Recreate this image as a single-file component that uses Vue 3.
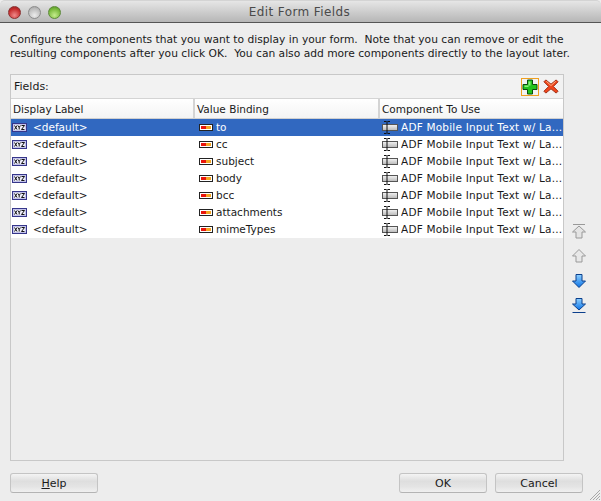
<script setup>
const rows = ['to', 'cc', 'subject', 'body', 'bcc', 'attachments', 'mimeTypes']
const intro = [
  'Configure the components that you want to display in your form.  Note that you can remove or edit the',
  'resulting components after you click OK.  You can also add more components directly to the layout later.'
]
</script>

<template>
  <div class="win">
    <header class="titlebar">
      <div class="lights">
        <span class="light red"></span>
        <span class="light grey"></span>
        <span class="light green"></span>
      </div>
      <span class="title">Edit Form Fields</span>
    </header>
    <div class="body">
      <div class="intro">
        <div v-for="line in intro" :key="line" class="line">{{ line }}</div>
      </div>
      <div class="main">
        <section class="panel">
          <div class="toolbar">
            <span class="fields">Fields:</span>
            <span class="plus-box">
              <svg width="16" height="16" viewBox="0 0 16 16"><path d="M5.500 1h5v4.500H15v5h-4.500V15h-5v-4.500H1v-5h4.500z" fill="#22c41c" stroke="#0b4d0b" stroke-width="1"/><path d="M6.500 2.500h2v4h-2z M2.500 6.500h4v1.500h-4z" fill="#8cf07c"/></svg>
            </span>
            <svg class="del" width="16" height="17" viewBox="0 0 17 17"><path d="M3 1.500 8.500 6 14 1.500 16 3.500 11 8.500 16 13.500 14 15.500 8.500 11 3 15.500 1 13.500 6 8.500 1 3.500z" fill="#f0451c" stroke="#9c2a10" stroke-width="1"/><path d="M3.500 3 8.500 7.500 13.500 3" fill="none" stroke="#ffb080" stroke-width="1"/></svg>
          </div>
          <div class="table">
            <div class="thead">
              <span class="th c1">Display Label</span>
              <span class="th c2">Value Binding</span>
              <span class="th c3">Component To Use</span>
            </div>
            <div v-for="(r, i) in rows" :key="r" class="row" :class="{ sel: i === 0 }">
              <span class="td c1">
                <svg class="ic" width="15" height="9" viewBox="0 0 15 9"><rect x=".5" y=".5" width="14" height="8" fill="#c4c4ec" stroke="#36368a"/><rect x="2" y="2" width="11" height="5" fill="#eeeefa"/><path d="M2.500 2.500 5 6.500M5 2.500 2.500 6.500M6 2.500 7.200 4.500 8.400 2.500M7.200 4.500V6.500M9.500 2.500H12.500L9.500 6.500H12.500" stroke="#111" stroke-width="1" fill="none"/></svg>
                <span class="txt">&lt;default&gt;</span>
              </span>
              <span class="td c2">
                <svg class="ic" width="14" height="7" viewBox="0 0 14 7"><rect x=".5" y=".5" width="13" height="6" fill="#fff" stroke="#222"/><rect x="2" y="2" width="5" height="3" fill="#e8140c"/><rect x="7" y="2" width="5" height="3" fill="#f5a623"/></svg>
                <span class="txt">{{ r }}</span>
              </span>
              <span class="td c3">
                <svg class="ic" width="16" height="15" viewBox="0 0 16 15"><defs><linearGradient id="f" x1="0" y1="0" x2="0" y2="1"><stop offset="0" stop-color="#f4f4f4"/><stop offset="1" stop-color="#b8b8b8"/></linearGradient></defs><rect x=".5" y="4.500" width="15" height="6" fill="url(#f)" stroke="#555"/><path d="M2 1.500h2.500M5.500 1.500H8M5 1.500v12M2 13.500h2.500M5.500 13.500H8" stroke="#111" stroke-width="1" fill="none"/></svg>
                <span class="txt ellip">ADF Mobile Input Text w/ La...</span>
              </span>
            </div>
          </div>
        </section>
        <aside class="movers">
          <svg width="16" height="16" viewBox="0 0 16 16"><path d="M2 1.500h12" stroke="#999"/><path d="M8 3 14.500 9H11V15H5V9H1.500z" fill="#e4e4e4" stroke="#999"/></svg>
          <svg width="16" height="16" viewBox="0 0 16 16"><path d="M8 1.500 14.500 8H11V14H5V8H1.500z" fill="#e8e8e8" stroke="#999"/></svg>
          <svg width="16" height="16" viewBox="0 0 16 16"><defs><linearGradient id="b" x1="0" y1="0" x2="0" y2="1"><stop offset="0" stop-color="#8fd0ff"/><stop offset="1" stop-color="#0a72e6"/></linearGradient></defs><path d="M5 1.500h6V8h3.500L8 14.500 1.500 8H5z" fill="url(#b)" stroke="#0b3f8c"/></svg>
          <svg width="16" height="16" viewBox="0 0 16 16"><path d="M5 .5h6V6h3.500L8 12 1.500 6H5z" fill="url(#b)" stroke="#0b3f8c"/><path d="M1.500 14.500h13" stroke="#0b3f8c"/></svg>
        </aside>
      </div>
      <footer class="footer">
        <button class="btn"><u>H</u>elp</button>
        <span class="spring"></span>
        <button class="btn">OK</button>
        <button class="btn">Cancel</button>
      </footer>
    </div>
    <svg class="grip" width="12" height="12" viewBox="0 0 12 12"><path d="M11 1 1 11M11 4 4 11M11 7 7 11M11 10 10 11" stroke="#a8a8a8" fill="none"/></svg>
  </div>
</template>

<style scoped>
.win {
  position: relative;
  width: 601px;
  height: 501px;
  display: flex;
  flex-direction: column;
  background: #ededed;
  font-family: "DejaVu Sans", sans-serif;
  font-size: 11px;
  color: #1a1a1a;
  overflow: hidden;
}
.titlebar {
  height: 23px;
  box-sizing: border-box;
  flex: none;
  display: flex;
  align-items: center;
  justify-content: center;
  background: linear-gradient(#e6e6e6, #b6b6b6);
  border-top: 1px solid #d4d4d4;
  border-bottom: 1px solid #555;
  border-radius: 5px 5px 0 0;
  position: relative;
}
.title { font-size: 12px; letter-spacing: .4px; color: #4a4a4a; padding-right: 2px; }
.lights {
  position: absolute;
  left: 8px;
  top: 5px;
  display: flex;
  gap: 7px;
}
.light {
  width: 13px;
  height: 13px;
  border-radius: 50%;
  box-sizing: border-box;
}
.red { background: radial-gradient(circle at 50% 75%, #f08a8a, #c42a2a 65%, #8e2222); border: 1px solid #8a3030; }
.grey { background: radial-gradient(circle at 50% 75%, #ececec, #bcbcbc 65%, #9a9a9a); border: 1px solid #8c8c8c; }
.green { background: radial-gradient(circle at 50% 75%, #c4ec8c, #78b83a 65%, #4e8a24); border: 1px solid #5c8a38; }
.body {
  flex: 1;
  display: flex;
  flex-direction: column;
  padding: 10px 18px 8px 10px;
  min-height: 0;
}
.intro {
  margin: 0 0 13px;
  height: 28px;
  flex: none;
}
.line {
  white-space: pre;
  line-height: 14px;
  font-size: 10.7px;
}
.main { display: flex; flex: none; height: 387px; }
.panel {
  width: 554px;
  flex: none;
  box-sizing: border-box;
  border: 1px solid #c8c8c8;
  display: flex;
  flex-direction: column;
}
.toolbar {
  height: 24px;
  flex: none;
  display: flex;
  align-items: center;
  padding: 0 4px 0 3px;
  background: #f2f2f2;
  border-bottom: 1px solid #d4d4d4;
  box-sizing: border-box;
}
.fields { flex: 1; }
.plus-box {
  width: 18px;
  height: 18px;
  box-sizing: border-box;
  border: 1px solid #f0a020;
  display: flex;
  align-items: center;
  justify-content: center;
  margin-right: 4px;
}
.table { flex: none; font-size: 10.5px; }
.thead {
  display: flex;
  height: 20px;
  background: linear-gradient(#fff, #f4f4f4);
  border-bottom: 1px solid #d0d0d0;
  box-sizing: border-box;
}
.th { display: flex; align-items: center; padding-left: 2px; border-right: 2px solid #d4d4d4; box-sizing: border-box; }
.th:last-child { border-right: 0; }
.c1 { width: 184px; flex: none; }
.c2 { width: 185px; flex: none; }
.c3 { flex: 1; min-width: 0; }
.row {
  display: flex;
  height: 17px;
  background: #fff;
}
.row.sel { background: #3168c0; color: #fff; }
.td {
  display: flex;
  align-items: center;
  box-sizing: border-box;
  white-space: nowrap;
}
.txt { margin-bottom: 2px; }
.td.c1 { padding-left: 1px; gap: 6px; }
.td.c2 { padding-left: 4px; gap: 3px; }
.td.c3 { padding-left: 2px; gap: 3px; }
.ic { flex: none; }
.ellip { overflow: hidden; letter-spacing: .2px; }
.movers {
  flex: 1;
  display: flex;
  flex-direction: column;
  align-items: center;
  gap: 9px;
  padding: 149px 0 0 7px;
}
.movers svg { flex: none; }
.footer {
  margin-top: 12px;
  display: flex;
  align-items: center;
  gap: 8px;
  height: 20px;
  flex: none;
}
.spring { flex: 1; }
.btn {
  width: 88px;
  height: 20px;
  padding: 0;
  box-sizing: border-box;
  border: 1px solid #c4c4c4;
  border-bottom-color: #b4b4b4;
  border-radius: 3px;
  background: linear-gradient(#f4f4f4 0, #dedede 40%, #e4e4e4 70%, #f0f0f0 100%);
  font: inherit;
  color: #1a1a1a;
}
.grip { position: absolute; right: 0; bottom: 0; }
</style>
